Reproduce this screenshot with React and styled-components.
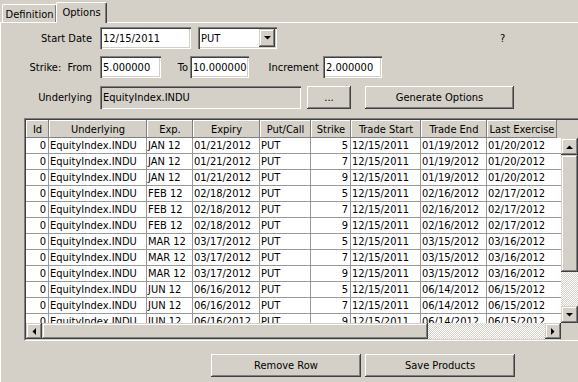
import React from 'react';
import styled, { createGlobalStyle } from 'styled-components';

const GlobalStyle = createGlobalStyle`
  html, body { margin: 0; padding: 0; background: #d4d0c8; }
  body {
    font-family: "DejaVu Sans Condensed", "Liberation Sans", Arial, sans-serif;
    font-size: 11px;
    color: #000;
  }
  * { box-sizing: border-box; }
`;

const raised = `
  background: #d4d0c8;
  box-shadow: inset -1px -1px #404040, inset 1px 1px #fff, inset -2px -2px #808080;
`;

const checker = `
  background-color: #d4d0c8;
  background-image: conic-gradient(#fff 25%, #d4d0c8 0 50%, #fff 0 75%, #d4d0c8 0);
  background-size: 2px 2px;
`;

const Window = styled.div`
  width: 578px;
  height: 382px;
  overflow: hidden;
  background: #d4d0c8;
  display: flex;
  flex-direction: column;
`;

const TabStrip = styled.div`
  display: flex;
  align-items: flex-end;
  height: 23px;
  padding-left: 2px;
  border-bottom: 1px solid #fff;
  flex-shrink: 0;
`;

const Tab = styled.div`
  width: ${p => p.$w}px;
  height: ${p => (p.$active ? 21 : 18)}px;
  margin-bottom: ${p => (p.$active ? -1 : 0)}px;
  margin-left: ${p => (p.$active ? -1 : 0)}px;
  position: relative;
  z-index: ${p => (p.$active ? 1 : 0)};
  background: #d4d0c8;
  border-top: 1px solid #fff;
  border-left: 1px solid #fff;
  border-right: 1px solid #404040;
  border-radius: 2px 2px 0 0;
  box-shadow: inset -1px 0 #808080;
  padding-top: 3px;
  line-height: 13px;
  text-align: center;
  white-space: nowrap;
`;

const Panel = styled.div`
  flex: 1;
  display: flex;
  flex-direction: column;
  border-left: 1px solid #fff;
  padding-top: 4px;
`;

const FormRow = styled.div`
  display: flex;
  align-items: stretch;
  height: ${p => p.$h}px;
  margin-bottom: ${p => p.$mb || 0}px;
  flex-shrink: 0;
`;

const Label = styled.div`
  width: ${p => p.$w}px;
  margin-left: ${p => p.$ml || 0}px;
  margin-right: ${p => p.$mr || 0}px;
  text-align: right;
  white-space: pre;
  display: flex;
  align-items: center;
  justify-content: flex-end;
`;

const Field = styled.div`
  width: ${p => p.$w}px;
  margin-left: ${p => p.$ml || 0}px;
  background: ${p => (p.$readOnly ? '#d4d0c8' : '#fff')};
  box-shadow: inset 1px 1px #808080, inset 2px 2px #404040, inset -1px -1px #fff, inset -2px -2px #d4d0c8;
  padding: 0 3px;
  display: flex;
  align-items: center;
  white-space: nowrap;
  overflow: hidden;
`;

const ComboText = styled.span`
  flex: 1;
`;

const DropButton = styled.div`
  width: 16px;
  align-self: stretch;
  margin: 2px -1px 2px 0;
  ${raised}
  box-shadow: inset -1px -1px #404040, inset 1px 1px #d4d0c8, inset -2px -2px #808080, inset 2px 2px #fff;
  display: flex;
  align-items: center;
  justify-content: center;
`;

const Help = styled.div`
  margin-left: 223px;
  display: flex;
  align-items: center;
`;

const Button = styled.div`
  width: ${p => p.$w}px;
  margin-left: ${p => p.$ml || 0}px;
  height: 23px;
  ${raised}
  display: flex;
  align-items: center;
  justify-content: center;
  white-space: nowrap;
`;

const TableFrame = styled.div`
  margin: 9px 0 0 23px;
  width: 556px;
  height: 223px;
  border: 1px solid;
  border-color: #808080 #fff #fff #808080;
  flex-shrink: 0;
`;

const TableInner = styled.div`
  width: 100%;
  height: 100%;
  border: 1px solid;
  border-color: #404040 #d4d0c8 #d4d0c8 #404040;
  display: grid;
  grid-template-columns: 535px 17px;
  grid-template-rows: 18px 185px 16px;
  background: #d4d0c8;
`;

const HeaderRow = styled.div`
  grid-column: 1 / -1;
  display: flex;
  background: #d4d0c8;
`;

const HeaderCell = styled.div`
  width: ${p => p.$w}px;
  flex-shrink: 0;
  background: #d4d0c8;
  box-shadow: inset -1px -1px #808080, inset 1px 1px #fff;
  display: flex;
  align-items: center;
  justify-content: center;
  white-space: nowrap;
`;

const Body = styled.div`
  overflow: hidden;
  background: #fff;
`;

const Row = styled.div`
  display: flex;
  height: 16px;
  border-bottom: 1px solid #999;
`;

const Cell = styled.div`
  width: ${p => p.$w}px;
  flex-shrink: 0;
  border-right: ${p => (p.$last ? 'none' : '1px solid #999')};
  padding: 0 2px 0 1px;
  text-align: ${p => p.$align || 'left'};
  line-height: 15px;
  white-space: nowrap;
  overflow: hidden;
`;

const VScroll = styled.div`
  display: flex;
  flex-direction: column;
  ${checker}
`;

const HScroll = styled.div`
  display: flex;
  ${checker}
`;

const ScrollBtn = styled.div`
  width: ${p => p.$w}px;
  height: ${p => p.$h}px;
  flex-shrink: 0;
  background: #d4d0c8;
  box-shadow: inset -1px -1px #404040, inset 1px 1px #d4d0c8, inset -2px -2px #808080, inset 2px 2px #fff;
  display: flex;
  align-items: center;
  justify-content: center;
`;

const Thumb = styled.div`
  width: ${p => p.$w}px;
  height: ${p => p.$h}px;
  flex-shrink: 0;
  background: #d4d0c8;
  box-shadow: inset -1px -1px #404040, inset 1px 1px #d4d0c8, inset -2px -2px #808080, inset 2px 2px #fff;
`;

const Track = styled.div`
  flex: 1;
`;

const Corner = styled.div`
  background: #d4d0c8;
`;

const BottomBar = styled.div`
  display: flex;
  margin: 13px 0 0 210px;
  gap: 4px;
`;

const Arrow = ({ dir }) => {
  const pts = {
    up: '0,4 7,4 3.5,0.5',
    down: '0,0 7,0 3.5,3.5',
    left: '4,0 4,7 0.5,3.5',
    right: '0,0 0,7 3.5,3.5',
  }[dir];
  const vertical = dir === 'up' || dir === 'down';
  return (
    <svg width={vertical ? 7 : 4} height={vertical ? 4 : 7} viewBox={vertical ? '0 0 7 4' : '0 0 4 7'}>
      <polygon points={pts} fill="#000" />
    </svg>
  );
};

const columns = [
  { title: 'Id', w: 23, align: 'right' },
  { title: 'Underlying', w: 98 },
  { title: 'Exp.', w: 46 },
  { title: 'Expiry', w: 67 },
  { title: 'Put/Call', w: 51 },
  { title: 'Strike', w: 40, align: 'right' },
  { title: 'Trade Start', w: 70 },
  { title: 'Trade End', w: 66 },
  { title: 'Last Exercise', w: 70, dataW: 74 },
];

const months = [
  ['JAN 12', '01/21/2012', '01/19/2012', '01/20/2012'],
  ['FEB 12', '02/18/2012', '02/16/2012', '02/17/2012'],
  ['MAR 12', '03/17/2012', '03/15/2012', '03/16/2012'],
  ['JUN 12', '06/16/2012', '06/14/2012', '06/15/2012'],
];

const rows = months.flatMap(([exp, expiry, tradeEnd, lastEx]) =>
  [5, 7, 9].map(strike => ['0', 'EquityIndex.INDU', exp, expiry, 'PUT', String(strike), '12/15/2011', tradeEnd, lastEx])
);

export default function App() {
  return (
    <>
      <GlobalStyle />
      <Window>
        <TabStrip>
          <Tab $w={55}>Definition</Tab>
          <Tab $w={51} $active>Options</Tab>
        </TabStrip>
        <Panel>
          <FormRow $h={22} $mb={7}>
            <Label $w={91} $mr={8}>Start Date</Label>
            <Field $w={91}>12/15/2011</Field>
            <Field $w={79} $ml={7}>
              <ComboText>PUT</ComboText>
              <DropButton><Arrow dir="down" /></DropButton>
            </Field>
            <Help>?</Help>
          </FormRow>
          <FormRow $h={22} $mb={8}>
            <Label $w={91} $mr={8}>{'Strike:  From'}</Label>
            <Field $w={61}>5.000000</Field>
            <Label $w={14} $ml={13} $mr={2}>To</Label>
            <Field $w={59}>10.000000</Field>
            <Label $w={50} $ml={20} $mr={4}>Increment</Label>
            <Field $w={59}>2.000000</Field>
          </FormRow>
          <FormRow $h={23}>
            <Label $w={91} $mr={8}>Underlying</Label>
            <Field $w={201} $readOnly>EquityIndex.INDU</Field>
            <Button $w={44} $ml={6}>...</Button>
            <Button $w={149} $ml={14}>Generate Options</Button>
          </FormRow>
          <TableFrame>
            <TableInner>
              <HeaderRow>
                {columns.map(c => (
                  <HeaderCell key={c.title} $w={c.w}>{c.title}</HeaderCell>
                ))}
              </HeaderRow>
              <Body>
                {rows.map((r, i) => (
                  <Row key={i}>
                    {r.map((v, j) => (
                      <Cell
                        key={j}
                        $w={columns[j].dataW || columns[j].w}
                        $align={columns[j].align}
                        $last={j === columns.length - 1}
                      >
                        {v}
                      </Cell>
                    ))}
                  </Row>
                ))}
              </Body>
              <VScroll>
                <ScrollBtn $w={17} $h={17}><Arrow dir="up" /></ScrollBtn>
                <Thumb $w={17} $h={117} />
                <Track />
                <ScrollBtn $w={17} $h={17}><Arrow dir="down" /></ScrollBtn>
              </VScroll>
              <HScroll>
                <ScrollBtn $w={16} $h={16}><Arrow dir="left" /></ScrollBtn>
                <Thumb $w={386} $h={16} />
                <Track />
                <ScrollBtn $w={16} $h={16}><Arrow dir="right" /></ScrollBtn>
              </HScroll>
              <Corner />
            </TableInner>
          </TableFrame>
          <BottomBar>
            <Button $w={150}>Remove Row</Button>
            <Button $w={150}>Save Products</Button>
          </BottomBar>
        </Panel>
      </Window>
    </>
  );
}
